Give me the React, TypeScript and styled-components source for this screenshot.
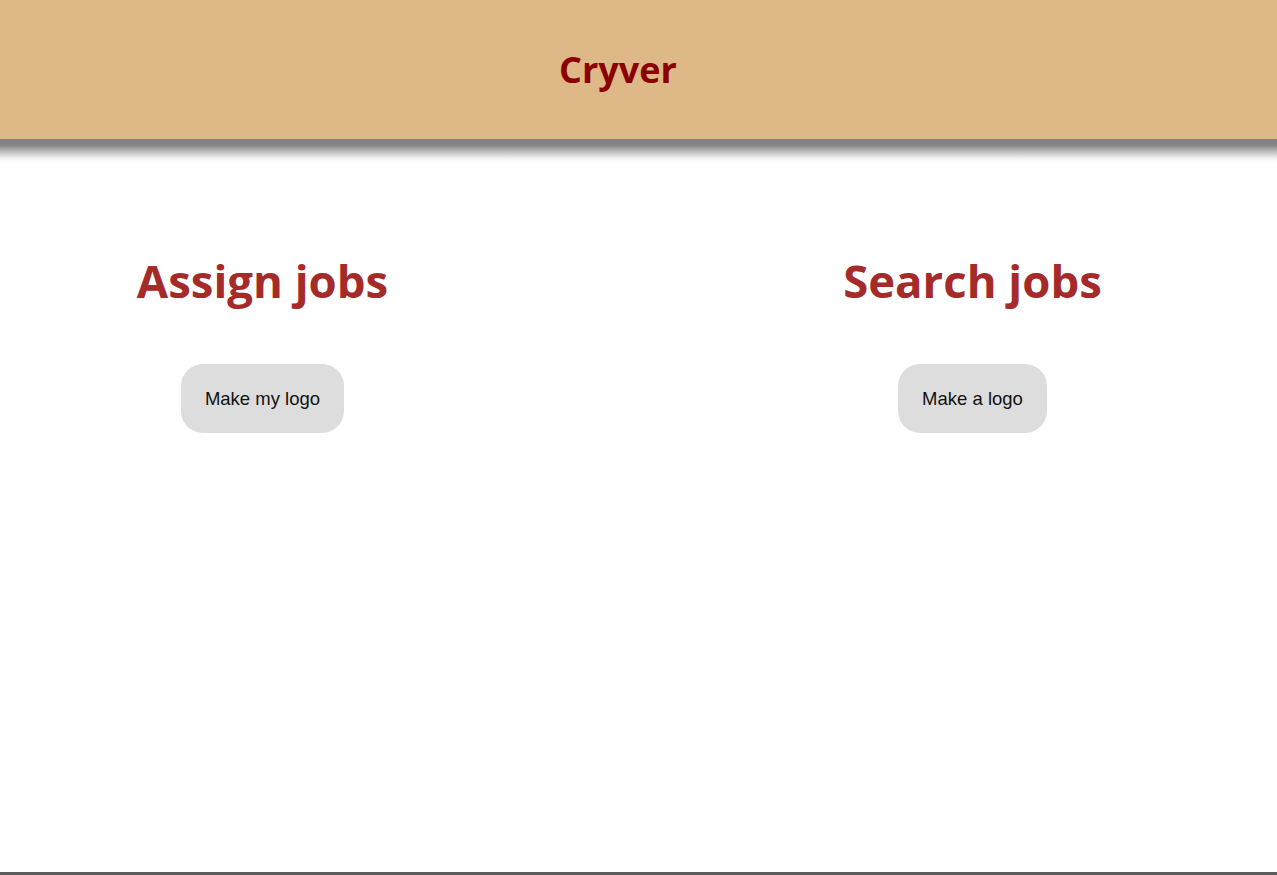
import React from "react";
import styled, { createGlobalStyle } from "styled-components";

const GlobalStyle = createGlobalStyle`
  html, body { margin: 0; padding: 0; background: #ffffff; }
  body { font-family: "Open Sans", "Noto Sans", sans-serif; }
`;

const Page = styled.div`
  position: relative;
  min-height: 875px;
  display: flex;
  flex-direction: column;
`;

const Header = styled.header`
  height: 139px;
  background: #deb887;
  display: flex;
  align-items: center;
  justify-content: center;
  padding-right: 41px;
`;

const Shade = styled.div`
  height: 24px;
  background: linear-gradient(to bottom, #808080 0px, #858585 6px, #c8c8c8 14px, #f6f6f6 20px, #ffffff 24px);
`;

const Brand = styled.h1`
  margin: 0;
  font-family: "Open Sans", "Noto Sans", sans-serif;
  font-weight: 700;
  font-size: 36px;
  color: #8b0000;
`;

const Columns = styled.main`
  flex: 1;
  display: grid;
  grid-template-columns: 525px 525px;
  column-gap: 185px;
  padding-top: 87px;
`;

const Column = styled.section`
  display: flex;
  flex-direction: column;
  align-items: center;
`;

const Title = styled.h2`
  margin: 0;
  font-family: "Open Sans", "Noto Sans", sans-serif;
  font-weight: 700;
  font-size: 45.5px;
  line-height: 60px;
  color: #a52a2a;
`;

const Action = styled.button`
  margin-top: 54px;
  border: none;
  background: #dddddd;
  border-radius: 22px;
  padding: 0 24px;
  height: 69px;
  font-family: "Liberation Sans", Arial, sans-serif;
  font-size: 18.5px;
  color: #111111;
  cursor: pointer;
`;

const Footer = styled.footer`
  height: 3px;
  background: #5c5c5c;
`;

export default function App() {
  return (
    <Page>
      <GlobalStyle />
      <Header>
        <Brand>Cryver</Brand>
      </Header>
      <Shade />
      <Columns>
        <Column>
          <Title>Assign jobs</Title>
          <Action>Make my logo</Action>
        </Column>
        <Column>
          <Title>Search jobs</Title>
          <Action>Make a logo</Action>
        </Column>
      </Columns>
      <Footer />
    </Page>
  );
}
